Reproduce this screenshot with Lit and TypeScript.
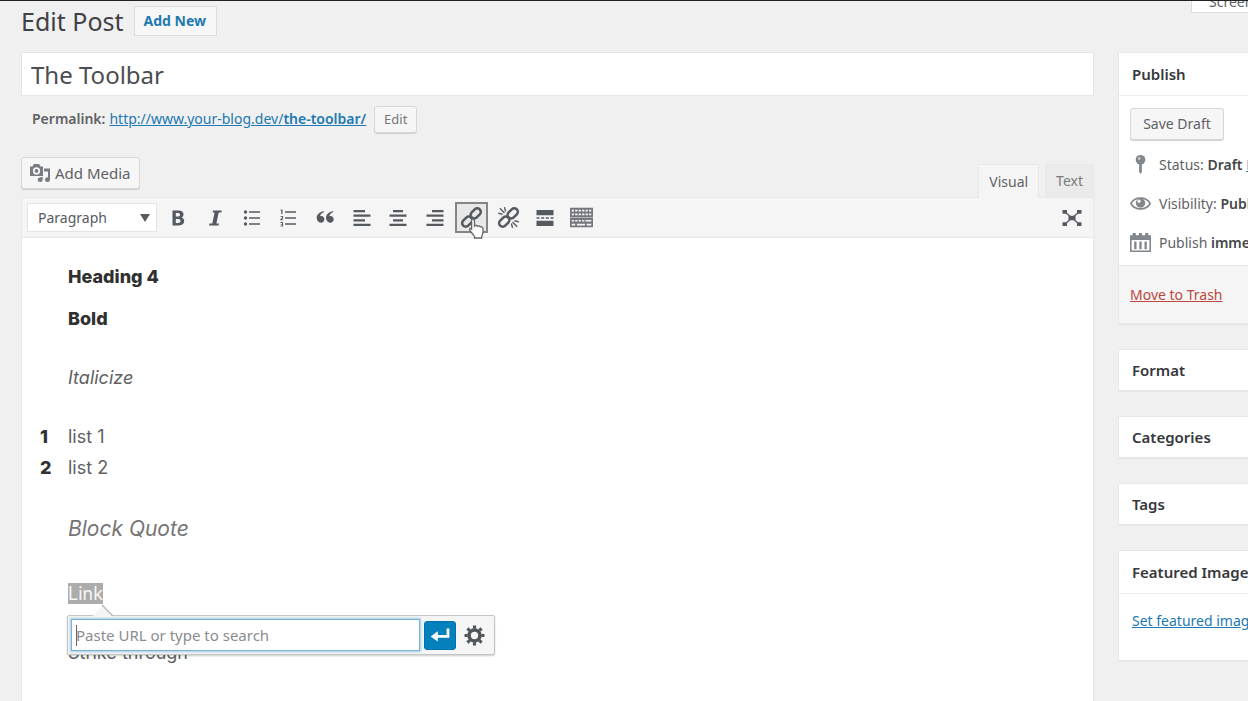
import { LitElement, html, css, svg } from "lit";
import { customElement } from "lit/decorators.js";

const icon = (body: unknown, size = 22, box = 20) =>
  html`<svg width=${size} height=${size} viewBox="0 0 ${box} ${box}" fill="currentColor" aria-hidden="true">${body}</svg>`;

const linkPath = svg`<g fill="none" stroke="currentColor" stroke-width="2.200">
  <rect x="-3.1" y="-4.6" width="6.200" height="10" rx="3.1" transform="translate(6.600 13.300) rotate(45)"/>
  <rect x="-3.1" y="-5.4" width="6.200" height="10" rx="3.1" transform="translate(13.400 6.700) rotate(45)"/>
</g>`;

const icons = {
  bold: svg`<path d="M4.500 2.500h6.200c3 0 4.800 1.300 4.800 3.900 0 1.500-.8 2.700-2.200 3.100 1.800.3 2.900 1.600 2.900 3.600 0 2.700-2 4.400-5.200 4.400H4.500zm3.300 2.500v3.500h2.100c1.300 0 2.100-.6 2.100-1.800S11.300 5 10 5zm0 6v4h2.500c1.400 0 2.200-.7 2.200-2s-.8-2-2.300-2z"/>`,
  italic: svg`<path d="M8 2.500h8.800l-.4 2.100h-2.700l-2.300 10.800h2.600l-.4 2.100H4l.4-2.100h2.900L9.600 4.600H7.600z"/>`,
  ul: svg`<circle cx="3.500" cy="4" r="1.700"/><circle cx="3.500" cy="10" r="1.700"/><circle cx="3.500" cy="16" r="1.700"/><path d="M7 3.300H18v1.400H7zm0 6H18v1.400H7zm0 6H18v1.400H7z"/>`,
  ol: svg`<path d="M3.300 1.500h1.200v4.500H3.300V2.800h-.8v-.7zM2.400 8h2.700v2.300L3.700 11.400h1.400v.8H2.300v-1l1.700-1.400v-1H2.400zM2.400 14h2.700v4.500H2.400v-.8h1.700v-1H2.800v-.8h1.300v-1H2.400zM7 3.300H18v1.400H7zm0 6H18v1.400H7zm0 6H18v1.400H7z"/>`,
  quote: svg`<path d="M8.900 4C6.400 5.100 5.200 6.700 5.200 8.200c.4-.2.700-.2 1.100-.2 1.800 0 3.100 1.400 3.100 3.200s-1.500 3.500-3.500 3.500c-2.400 0-4.200-2-4.200-4.900C1.700 6.200 4.500 4.200 8.900 3zM18.200 4c-2.500 1.100-3.700 2.700-3.700 4.200.4-.2.700-.2 1.100-.2 1.800 0 3.100 1.400 3.100 3.200s-1.500 3.500-3.500 3.500c-2.400 0-4.200-2-4.200-4.900 0-3.600 2.800-5.600 7.200-6.800z"/>`,
  left: svg`<path d="M1.500 2H13v2.200H1.500zm0 4.600h17v2.200h-17zm0 4.600H13v2.200H1.500zm0 4.600h17V18h-17z"/>`,
  center: svg`<path d="M5 2h10v2.200H5zM1.500 6.600h17v2.200h-17zM5 11.200h10v2.200H5zm-3.500 4.600h17V18h-17z"/>`,
  right: svg`<path d="M7 2h11.500v2.200H7zM1.500 6.600h17v2.200h-17zM7 11.200h11.500v2.200H7zm-5.500 4.600h17V18h-17z"/>`,
  link: linkPath,
  unlink: svg`${linkPath}<g stroke="currentColor" stroke-width="1.200"><path d="M2.500 2l4 4M6.500 1l1 3.800M1 6.200L4.800 7.200M17.500 18l-4-4M13.500 19l-1-3.800M19 13.800l-3.800-1"/></g>`,
  more: svg`<path d="M1.500 2h17v5.200h-17zM1.500 9.300h3v1.400h-3zm4.700 0h3v1.400h-3zm4.600 0h3v1.400h-3zm4.700 0h3v1.400h-3zM1.500 12.800h17V18h-17z"/>`,
  kitchen: svg`<g opacity=".8"><path fill-rule="evenodd" d="M0 1.500h20v8H0zm1.500 1.800v1.500h2V3.300zm3 0v1.500h2V3.300zm3 0v1.500h2V3.300zm3 0v1.500h2V3.300zm3 0v1.500h2V3.300zm3 0v1.500h2V3.300zM1.500 6.500V8h2V6.500zm3 0V8h2V6.500zm3 0V8h2V6.500zm3 0V8h2V6.500zm3 0V8h2V6.500zm3 0V8h2V6.500zM0 10.500h20v8H0zm1.500 1.600v1.400h2v-1.400zm3 0v1.400h2v-1.400zm3 0v1.400h2v-1.400zm3 0v1.400h2v-1.400zm3 0v1.400h5v-1.400zM1.500 15.500V17h3v-1.500zm4.500 0V17h7v-1.500zm8.500 0V17h4v-1.500z"/><path d="M0 9.300h20v1.400H0z" opacity=".5"/></g>`,
};

const tools: [keyof typeof icons, string][] = [
  ["bold", "Bold"], ["italic", "Italic"], ["ul", "Bulleted list"], ["ol", "Numbered list"],
  ["quote", "Blockquote"], ["left", "Align left"], ["center", "Align center"], ["right", "Align right"],
  ["link", "Insert/edit link"], ["unlink", "Remove link"], ["more", "Insert Read More tag"], ["kitchen", "Toolbar Toggle"],
];

@customElement("app-root")
export class AppRoot extends LitElement {
  static styles = css`
    :host { display: block; }
    * { box-sizing: border-box; }
    button, input, select { font: inherit; color: inherit; margin: 0; }
    h1, h2, h4, p, ol, blockquote { margin: 0; padding: 0; font-weight: 400; }
    svg { display: block; flex: none; }
    a { color: #2079b0; }
    .page {
      min-height: 100vh; display: flex; flex-direction: column; overflow: hidden;
      background: #f0f0f0; border-top: 1px solid #23202a; color: #5f6165;
      font: 14px/20px "Noto Sans", "Open Sans", sans-serif;
    }
    .head { display: flex; align-items: flex-start; height: 51px; padding-left: 21px; }
    h1 { font-size: 25px; line-height: 40px; color: #3f4145; margin-right: 10px; white-space: nowrap; }
    .addnew {
      margin-top: 5px; height: 30px; padding: 4px 10px 4px 9px; border: 1px solid #ddd; background: #f7f7f7;
      font-weight: 700; text-decoration: none;
    }
    .screen {
      width: 57px; height: 30px; margin: -18px 0 0 auto; padding: 7px 0 0 17px; border: 1px solid #ddd;
      border-right: 0; background: #fff; text-align: left; white-space: nowrap; overflow: hidden; flex: none;
    }
    .cols { flex: 1; display: grid; grid-template-columns: minmax(0, 1fr) 130px; column-gap: 24px; padding-left: 21px; }
    .main { display: flex; flex-direction: column; min-width: 0; }
    .title {
      width: 100%; height: 44px; border: 1px solid #e6e6e6; background: #fff; padding: 0 9px;
      font-size: 24px; line-height: 32px; color: #4b4d51; outline: 0;
    }
    .perma { display: flex; align-items: center; height: 28px; margin: 9px 0 0 11px; white-space: nowrap; }
    .perma b { font-weight: 600; }
    .perma a { margin: 0 8px 0 4px; }
    .btn {
      border: 1px solid #d8d8d8; border-radius: 3px; background: #f6f6f6; box-shadow: 0 1px 0 #d0d0d0;
      display: flex; align-items: center; justify-content: center; padding: 0; white-space: nowrap;
    }
    .edit { width: 43px; height: 27px; font-size: 13px; color: #777; }
    .media-row { display: flex; align-items: flex-start; justify-content: space-between; margin-top: 24px; height: 40px; }
    .media { height: 32px; padding: 0 8px; gap: 5px; font-size: 15px; }
    .media svg { color: #777c82; }
    .tabs { display: flex; gap: 6px; margin-top: 7px; }
    .tab { height: 33px; border: 1px solid #e8e8e8; border-bottom: 0; background: #ebebeb; padding: 0 10px; color: #7b7b7b; }
    .tab.on { background: #f5f5f5; color: #5f6165; position: relative; height: 34px; z-index: 1; }
    .editor { flex: 1; border: 1px solid #e8e8e8; border-bottom: 0; background: #fff; }
    .toolbar {
      height: 40px; display: flex; align-items: center; gap: 3px; padding: 0 5px; background: #f5f5f5;
      border-bottom: 1px solid #e8e8e8; color: #555a61;
    }
    .fmt { position: relative; width: 130px; flex: none; }
    .fmt select {
      appearance: none; width: 100%; height: 29px; border: 1px solid #e4e4e4; border-radius: 0;
      background: #fff; padding: 0 10px; display: block; outline: 0;
    }
    .fmt svg { position: absolute; right: 7px; top: 11px; pointer-events: none; }
    .tools { display: grid; grid-template-columns: repeat(12, 1fr); width: 440px; justify-items: center; }
    .tool {
      position: relative; width: 33px; height: 31px; border: 1px solid transparent; background: none; padding: 0;
      display: flex; align-items: center; justify-content: center;
    }
    .tool.on { border: 2px solid #858585; background: #e8e8e8; }
    .cursor { position: absolute; left: 11px; top: 13px; z-index: 2; }
    .full { margin-left: auto; }
    .doc { padding: 23px 46px 0; font: 18px/31px Inter, "Liberation Sans", sans-serif; color: #606062; }
    .doc h4 { font-size: 18px; font-weight: 800; color: #303030; margin-bottom: 11px; }
    .doc p, .doc ol { margin-bottom: 28px; }
    .doc strong { color: #303030; font-weight: 800; }
    .doc ol { list-style: none; counter-reset: n; }
    .doc li { counter-increment: n; display: flex; margin-left: -28px; }
    .doc li::before { content: counter(n); width: 28px; flex: none; font-weight: 800; color: #303030; }
    .doc blockquote { font-size: 21px; line-height: 36px; font-style: italic; color: #757577; margin-bottom: 31px; }
    .linkline { position: relative; }
    .sel { background: #acacac; color: #f6f6f6; }
    .pop {
      position: absolute; left: -1px; top: 37px; width: 428px; height: 40px; display: flex; align-items: center; gap: 4px;
      padding: 0 3px; background: #f5f5f5; border: 1px solid #c6c6c6; border-radius: 2px; box-shadow: 0 1px 2px #0003;
      font: 15px/20px "Noto Sans", "Open Sans", sans-serif;
    }
    .tip { position: absolute; left: 24px; top: -12px; }
    .url {
      flex: 1; min-width: 0; height: 32px; border: 1px solid #7db2d8; background: #fff; padding: 0 4px;
      box-shadow: 0 0 2px 1px #a5cde4; outline: 0;
    }
    .url::placeholder { color: #8a8c90; opacity: 1; }
    .caret { position: absolute; left: 8px; top: 9px; width: 1px; height: 21px; background: #666; }
    .go { width: 32px; height: 29px; border: 1px solid #0073aa; border-radius: 3px; background: #0480bd; color: #fff; padding: 0; display: grid; place-items: center; }
    .gear { width: 28px; height: 29px; border: 0; background: none; padding: 0; display: grid; place-items: center; color: #50555b; margin-right: 3px; }
    .side { display: flex; flex-direction: column; gap: 25px; white-space: nowrap; overflow: hidden; }
    .box { background: #fff; border: 1px solid #e8e8e8; border-right: 0; box-shadow: 0 1px 1px #0000000a; }
    .box h2 { font-size: 15px; font-weight: 600; line-height: 40px; padding: 0 13px; color: #36383c; }
    .box h2.ruled { line-height: 42px; border-bottom: 1px solid #eee; }
    .pub { padding: 12px 0 3px 11px; }
    .draft { width: 94px; height: 32px; margin-bottom: 5px; }
    .row { display: flex; align-items: center; height: 39px; gap: 8px; }
    .row svg { color: #82878c; }
    .row b { font-weight: 600; color: #44464a; }
    .trash { border-top: 1px solid #e2e2e2; background: #f5f5f5; padding: 19px 11px 18px; }
    .trash a { color: #bd4540; }
    .feat { padding: 17px 13px 29px; }
  `;

  private cursor() {
    return html`<svg class="cursor" width="18" height="22" viewBox="0 0 18 22" aria-hidden="true">
      <path d="M4.500 2c1.200 0 2 .8 2 2v5c.6-.8 2.400-.7 2.900.3.8-.7 2.400-.4 2.800.6 1.300-.5 2.800.3 2.800 1.900v3.700c0 1.500-1 2.500-1.300 4V21H6.500v-1.500C5.500 17.500 2 14.500 1.500 12.500c.2-1.300 1.300-1.300 2.100-.4V4c0-1.200.3-2 .9-2z" fill="#fff" stroke="#666" stroke-width="1.300"/>
    </svg>`;
  }

  render() {
    return html`<div class="page">
      <header class="head">
        <h1>Edit Post</h1>
        <a class="addnew" href="#">Add New</a>
        <button class="screen">Screen Options</button>
      </header>
      <div class="cols">
        <main class="main">
          <input class="title" aria-label="Title" .value=${"The Toolbar"} />
          <div class="perma">
            <b>Permalink:</b>
            <a href="#">http://www.your-blog.dev/<b>the-toolbar/</b></a>
            <button class="btn edit">Edit</button>
          </div>
          <div class="media-row">
            <button class="btn media">
              ${icon(svg`<path fill-rule="evenodd" d="M0 3.500h2.500L3.900 1h5.200l1.400 2.500H13V13H0zM6.500 4.300a3.600 3.600 0 1 0 0 7.200 3.600 3.600 0 0 0 0-7.200zm0 1.700a1.900 1.900 0 1 1 0 3.800 1.900 1.900 0 0 1 0-3.800z"/><path d="M14 5.500h6v11.200a2.500 2.300 0 1 1-2-2.300V8.500h-4zM10.500 14h2.200v2.800a2.500 2.300 0 1 1-2.200-2.300z"/>`, 20)}
              Add Media
            </button>
            <div class="tabs">
              <button class="tab on">Visual</button>
              <button class="tab">Text</button>
            </div>
          </div>
          <section class="editor">
            <div class="toolbar">
              <div class="fmt">
                <select aria-label="Format"><option>Paragraph</option></select>
                <svg width="10" height="8" viewBox="0 0 10 8"><path d="M0 0h10L5 8z" fill="currentColor"/></svg>
              </div>
              <div class="tools">
                ${tools.map(([k, label]) => html`<button class="tool ${k === "link" ? "on" : ""}" aria-label=${label}>
                  ${icon(icons[k], k === "kitchen" || k === "link" || k === "unlink" ? 23 : 20)}${k === "link" ? this.cursor() : ""}
                </button>`)}
              </div>
              <button class="tool full" aria-label="Distraction-free writing mode">
                ${icon(svg`<path d="M3 4l14 12M17 4L3 16" stroke="currentColor" stroke-width="1.300"/><path d="M.5 2H5v3.800H.5zM15 2h4.500v3.800H15zM.5 14.200H5V18H.5zM15 14.200h4.500V18H15zM6.500 7.800h7v4.400h-7z"/>`, 20)}
              </button>
            </div>
            <div class="doc">
              <h4>Heading 4</h4>
              <p><strong>Bold</strong></p>
              <p><em>Italicize</em></p>
              <ol><li>list 1</li><li>list 2</li></ol>
              <blockquote>Block Quote</blockquote>
              <div class="linkline">
                <p><span class="sel">Link</span></p>
                <div class="pop">
                  <svg class="tip" width="22" height="13" viewBox="0 0 22 13"><path d="M0 13L10 2l11 11z" fill="#f5f5f5"/><path d="M10 1l11 11" stroke="#bbb" stroke-width="1.500"/></svg>
                  <input class="url" aria-label="URL" placeholder="Paste URL or type to search" />
                  <span class="caret"></span>
                  <button class="go" aria-label="Apply">${icon(svg`<path d="M16 4h2.500v8.500H8V16l-6.500-4.700L8 6.500V10h8z"/>`, 22)}</button>
                  <button class="gear" aria-label="Link options">${icon(svg`<g fill="none" stroke="currentColor"><circle cx="10" cy="10" r="5.200" stroke-width="3.400"/><path d="M10 .5v3M10 16.500v3M.5 10h3M16.500 10h3M3.300 3.300l2.100 2.100M14.600 14.600l2.100 2.100M16.700 3.300l-2.100 2.100M5.400 14.600l-2.100 2.100" stroke-width="3"/></g>`, 21)}</button>
                </div>
              </div>
              <p>Strike through</p>
            </div>
          </section>
        </main>
        <aside class="side">
          <section class="box">
            <h2 class="ruled">Publish</h2>
            <div class="pub">
              <button class="btn draft">Save Draft</button>
              <div class="row">${icon(svg`<circle cx="10" cy="5.500" r="4.600"/><path d="M8.700 9h2.600v8L10 19 8.700 17z"/><circle cx="8.800" cy="4.300" r="1.300" fill="#ccc"/>`, 21)}<span>Status: <b>Draft</b> <a href="#">Edit</a></span></div>
              <div class="row">${icon(svg`<path d="M.8 10C4.500 3.200 15.500 3.200 19.200 10 15.500 16.800 4.500 16.800.8 10z" fill="none" stroke="currentColor" stroke-width="1.500"/><circle cx="10" cy="9.500" r="4.500"/><circle cx="8.600" cy="7.800" r="1.500" fill="#fff"/>`, 21)}<span>Visibility: <b>Public</b></span></div>
              <div class="row">${icon(svg`<path fill-rule="evenodd" d="M0 3h2.500V1h3v2h3V1h3v2h3V1h3v2H20v16H0zm1.500 4.500v10h17v-10z"/><path d="M4 9h2.200v7.500H4zm4.900 0h2.200v7.500H8.900zm4.900 0H16v7.500h-2.200z"/>`, 21)}<span>Publish <b>immediately</b></span></div>
            </div>
            <div class="trash"><a href="#">Move to Trash</a></div>
          </section>
          <section class="box"><h2>Format</h2></section>
          <section class="box"><h2>Categories</h2></section>
          <section class="box"><h2>Tags</h2></section>
          <section class="box">
            <h2 class="ruled">Featured Image</h2>
            <div class="feat"><a href="#">Set featured image</a></div>
          </section>
        </aside>
      </div>
    </div>`;
  }
}
